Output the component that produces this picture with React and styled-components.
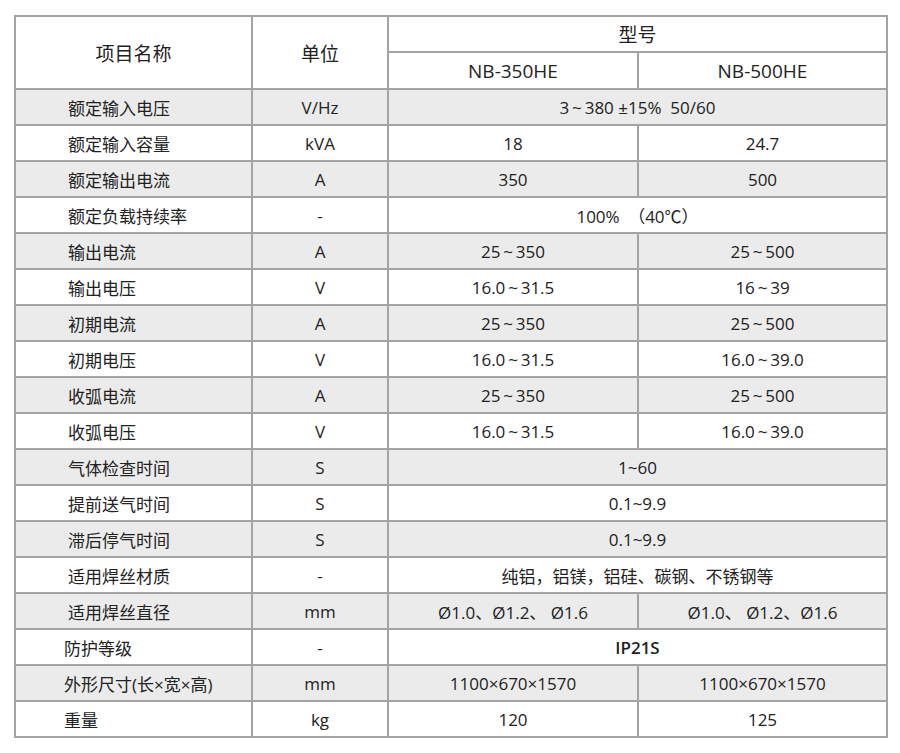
import React from 'react';
import styled, { createGlobalStyle } from 'styled-components';

const Global = createGlobalStyle`
  html, body { margin: 0; padding: 0; background: #fff; }
  body {
    font-family: "Open Sans", "Noto Sans CJK SC", sans-serif;
    color: #222;
  }
`;

const Page = styled.div`
  padding: 15px 0 0 14px;
`;

const SpecGrid = styled.div`
  display: grid;
  width: 874px;
  box-sizing: border-box;
  grid-template-columns: 235px 134px 248px 247px;
  grid-template-rows: 34px 35px;
  grid-auto-rows: 34px;
  gap: 2px;
  padding: 2px;
  background: #a3a3a3;
`;

const HeadCell = styled.div`
  background: #fff;
  display: flex;
  align-items: center;
  justify-content: center;
  font-size: 19px;
  grid-row: span ${p => p.$rows || 1};
  grid-column: span ${p => p.$cols || 1};
`;

const NameCell = styled.div`
  background: ${p => (p.$shade ? '#ebebeb' : '#fff')};
  display: flex;
  align-items: center;
  padding-left: ${p => p.$indent}px;
  font-size: 17px;
  white-space: pre;
`;

const ValueCell = styled.div`
  background: ${p => (p.$shade ? '#ebebeb' : '#fff')};
  display: flex;
  align-items: center;
  justify-content: center;
  font-size: 17px;
  font-weight: ${p => (p.$strong ? 600 : 400)};
  white-space: pre;
  grid-column: span ${p => p.$span || 1};
`;

const T = '\u2009~\u2009';

const rows = [
  { name: '额定输入电压', unit: 'V/Hz', values: [`3${T}380 ±15%  50/60`] },
  { name: '额定输入容量', unit: 'kVA', values: ['18', '24.7'] },
  { name: '额定输出电流', unit: 'A', values: ['350', '500'] },
  { name: '额定负载持续率', unit: '-', values: ['100%　（40℃）'] },
  { name: '输出电流', unit: 'A', values: [`25${T}350`, `25${T}500`] },
  { name: '输出电压', unit: 'V', values: [`16.0${T}31.5`, `16${T}39`] },
  { name: '初期电流', unit: 'A', values: [`25${T}350`, `25${T}500`] },
  { name: '初期电压', unit: 'V', values: [`16.0${T}31.5`, `16.0${T}39.0`] },
  { name: '收弧电流', unit: 'A', values: [`25${T}350`, `25${T}500`] },
  { name: '收弧电压', unit: 'V', values: [`16.0${T}31.5`, `16.0${T}39.0`] },
  { name: '气体检查时间', unit: 'S', values: ['1~60'] },
  { name: '提前送气时间', unit: 'S', values: ['0.1~9.9'] },
  { name: '滞后停气时间', unit: 'S', values: ['0.1~9.9'] },
  { name: '适用焊丝材质', unit: '-', values: ['纯铝，铝镁，铝硅、碳钢、不锈钢等'] },
  { name: '适用焊丝直径', unit: 'mm', values: ['Ø1.0、Ø1.2、 Ø1.6', 'Ø1.0、 Ø1.2、Ø1.6'] },
  { name: '防护等级', unit: '-', values: ['IP21S'], indent: 48, strong: true },
  { name: '外形尺寸(长×宽×高)', unit: 'mm', values: ['1100×670×1570', '1100×670×1570'], indent: 48 },
  { name: '重量', unit: 'kg', values: ['120', '125'], indent: 48 },
];

export default function App() {
  return (
    <Page>
      <Global />
      <SpecGrid>
        <HeadCell $rows={2}>项目名称</HeadCell>
        <HeadCell $rows={2}>单位</HeadCell>
        <HeadCell $cols={2}>型号</HeadCell>
        <HeadCell>NB-350HE</HeadCell>
        <HeadCell>NB-500HE</HeadCell>
        {rows.map((r, i) => {
          const shade = i % 2 === 0;
          return (
            <React.Fragment key={r.name}>
              <NameCell $shade={shade} $indent={r.indent ?? 52}>{r.name}</NameCell>
              <ValueCell $shade={shade}>{r.unit}</ValueCell>
              {r.values.map((v, j) => (
                <ValueCell
                  key={j}
                  $shade={shade}
                  $span={r.values.length === 1 ? 2 : 1}
                  $strong={r.strong}
                >
                  {v}
                </ValueCell>
              ))}
            </React.Fragment>
          );
        })}
      </SpecGrid>
    </Page>
  );
}
